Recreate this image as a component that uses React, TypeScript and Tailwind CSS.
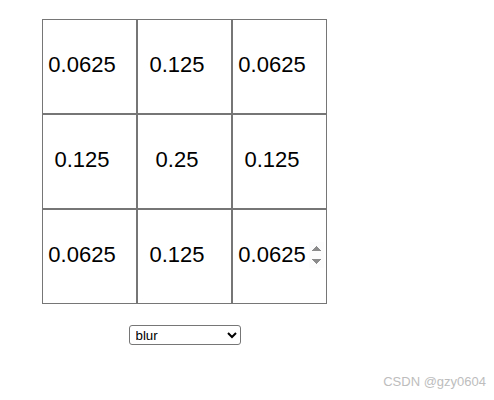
const kernel = [
  ["0.0625", "0.125", "0.0625"],
  ["0.125", "0.25", "0.125"],
  ["0.0625", "0.125", "0.0625"],
];

export default function App() {
  return (
    <div className="relative h-[400px] w-[494px] bg-white font-['Liberation_Sans',Arial,sans-serif] text-black">
      <div className="ml-[42px] w-[285px] pt-[19px]">
        {/* kernel grid */}
        <div className="grid grid-cols-3">
          {kernel.flat().map((v, i) => (
            <input
              key={i}
              type="number"
              defaultValue={v}
              className={`h-[95px] w-[95px] border border-[#767676] bg-white px-[2px] pb-[4px] text-center text-[22px] ${
                i === 8 ? "[&::-webkit-inner-spin-button]:bg-[#f0f0f0] [&::-webkit-inner-spin-button]:opacity-100" : ""
              }`}
            />
          ))}
        </div>

        <div className="mt-[21px] flex justify-center">
          <select className="h-[20px] w-[112px] rounded-[3px] border border-[#767676] bg-white pl-[2px] text-[13.33px]">
            <option>blur</option>
            <option>sharpen</option>
            <option>edge</option>
          </select>
        </div>
      </div>

      <span className="absolute bottom-[9px] right-[8px] text-[13px] text-[#bdbdbd]">CSDN @gzy0604</span>
    </div>
  );
}
